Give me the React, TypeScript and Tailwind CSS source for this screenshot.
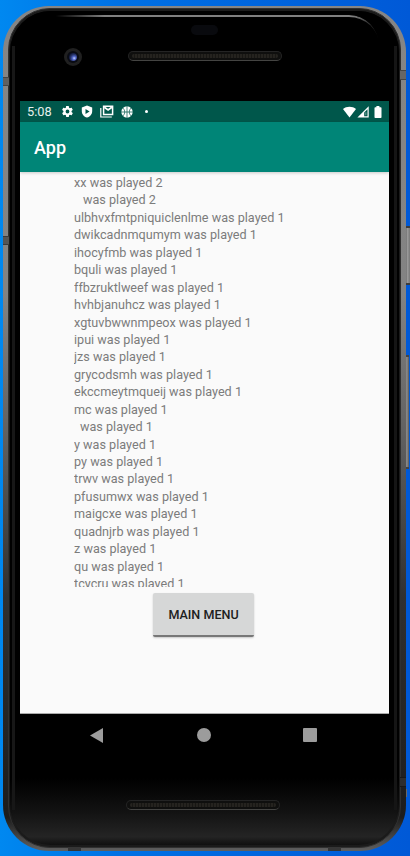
import React from "react";

const entries: { word: string; count: number; indent?: string }[] = [
  { word: "xx", count: 2 },
  { word: "", count: 2, indent: "pl-[9px]" },
  { word: "ulbhvxfmtpniquiclenlme", count: 1 },
  { word: "dwikcadnmqumym", count: 1 },
  { word: "ihocyfmb", count: 1 },
  { word: "bquli", count: 1 },
  { word: "ffbzruktlweef", count: 1 },
  { word: "hvhbjanuhcz", count: 1 },
  { word: "xgtuvbwwnmpeox", count: 1 },
  { word: "ipui", count: 1 },
  { word: "jzs", count: 1 },
  { word: "grycodsmh", count: 1 },
  { word: "ekccmeytmqueij", count: 1 },
  { word: "mc", count: 1 },
  { word: "", count: 1, indent: "pl-[6px]" },
  { word: "y", count: 1 },
  { word: "py", count: 1 },
  { word: "trwv", count: 1 },
  { word: "pfusumwx", count: 1 },
  { word: "maigcxe", count: 1 },
  { word: "quadnjrb", count: 1 },
  { word: "z", count: 1 },
  { word: "qu", count: 1 },
  { word: "tcycru", count: 1 },
];

function Speaker() {
  return (
    <div className="h-[10px] w-[154px] rounded-full border border-[#242424] border-b-[#444442] bg-[#0f0f0e] px-[3px] py-[2px]">
      <div className="h-full rounded-full bg-[repeating-linear-gradient(90deg,#25231f_0px,#25231f_2px,#181714_2px,#181714_3px)]" />
    </div>
  );
}

function StatusBar() {
  return (
    <div className="flex h-[21px] items-center bg-[#00574b] pl-[7px] pr-[7px] text-white">
      <span className="w-[35px] text-[12.800px] leading-[21px] text-[#e6efed]">5:08</span>
      <svg viewBox="0 0 24 24" className="-ml-px h-[13px] w-[13px]" fill="currentColor">
        <path d="M19.4 13a7.7 7.7 0 0 0 0-2l2.1-1.6c.2-.2.3-.5.1-.7l-2-3.4c-.1-.3-.4-.3-.6-.2l-2.5 1a7 7 0 0 0-1.7-1l-.4-2.6c0-.3-.2-.5-.5-.5h-4c-.3 0-.5.2-.5.5L9 5.100a7 7 0 0 0-1.700 1l-2.500-1c-.2-.1-.5 0-.6.2l-2 3.400c-.1.200-.1.500.1.700L4.500 11a7.700 7.700 0 0 0 0 2l-2.100 1.600c-.2.200-.3.500-.1.700l2 3.400c.1.300.4.300.6.200l2.500-1a7 7 0 0 0 1.700 1l.4 2.600c0 .3.200.5.500.5h4c.3 0 .5-.2.500-.5l.4-2.600a7 7 0 0 0 1.700-1l2.500 1c.2.100.5 0 .6-.2l2-3.400c.1-.2.100-.5-.1-.7zM12 15.500a3.500 3.500 0 1 1 0-7 3.500 3.500 0 0 1 0 7z" />
      </svg>
      <svg viewBox="0 0 12 13" className="ml-[7px] h-[13px] w-[12px]" fill="currentColor">
        <path fillRule="evenodd" d="M6 .5 11.200 2.500V6.300C11.200 9.300 9 11.800 6 12.600 3 11.800.8 9.300.8 6.300V2.500zM4.500 4v5L8.600 6.500z" />
      </svg>
      <svg viewBox="0 0 14 13" className="ml-[7px] h-[13px] w-[14px]" fill="none" stroke="currentColor">
        <path d="M.8 3v9h11" strokeWidth="1.200" />
        <path d="M3.600 1.300h9v8.300h-9z" strokeWidth="1.500" />
        <path d="M4.300 2.200 8.100 5l3.800-2.800" strokeWidth="1.800" />
      </svg>
      <svg viewBox="0 0 12 12" className="ml-[7px] h-[12px] w-[12px]">
        <circle cx="6" cy="6" r="5.700" fill="white" />
        <path d="M6 0v12M0 6h12M1.800 2c2.600 2.300 2.600 5.700 0 8M10.200 2c-2.600 2.300-2.600 5.700 0 8" stroke="#00574b" strokeWidth=".7" fill="none" />
      </svg>
      <i className="ml-[12px] h-[3px] w-[3px] rounded-full bg-white" />
      <div className="ml-auto flex items-center">
        <svg viewBox="0 0 13 12" className="h-[12px] w-[13px]" fill="currentColor">
          <path d="M0 3C3.500-.1 9.500-.1 13 3L6.500 11.500z" />
        </svg>
        <svg viewBox="0 0 12 12" className="ml-[1px] h-[12px] w-[12px]" fill="currentColor">
          <path fillRule="evenodd" d="M11.700.3v11.200H.4zM7.200 6.600v3.700h3.300V3.300z" />
          <path d="M8.400 6.200h.9v3h-.9z" opacity=".5" />
        </svg>
        <svg viewBox="0 0 8 12" className="ml-[5px] h-[12px] w-[8px]" fill="currentColor">
          <path d="M2.400 0h3v1.200h1.300q.8 0 .8.800v9.200q0 .8-.8.800H1.300q-.8 0-.8-.8V2q0-.8.8-.8h1.100z" />
        </svg>
      </div>
    </div>
  );
}

export default function App() {
  return (
    <main className="relative h-[856px] w-[410px] overflow-hidden bg-[linear-gradient(90deg,#0088f0_0%,#0070e4_30%,#0059d7_100%)] pl-[3px] pt-[6px] font-[Roboto,sans-serif]">
      <div className="absolute left-[405px] top-[226px] h-[59px] w-[5px] border-y-2 border-[#3c3c3c] bg-[linear-gradient(90deg,#555,#999_50%,#777)]" />
      <div className="absolute left-[404px] top-[355px] h-[114px] w-[5px] border-y-2 border-[#444] bg-[linear-gradient(90deg,#777,#8a8a8a_60%,#555)]" />
      <div className="absolute left-[405px] top-[789px] h-[8px] w-[2px] bg-[#686868]" />

      <div className="relative h-[845px] w-[403px] rounded-[46px] bg-[linear-gradient(180deg,#858585_0%,#838383_34%,#626262_50%,#303030_70%,#1c1c1c_96%,#606060_100%)] px-[5px] pb-[3px] pt-[2px]">
        <div className="absolute left-0 top-[71px] h-[9px] w-[6px] border-y border-[#464646] bg-[#606060]" />
        <div className="absolute left-0 top-[230px] h-[9px] w-[6px] border-y border-[#3b3b3b] bg-[#555]" />
        <div className="absolute right-0 top-[64px] h-[10px] w-[6px] border-y border-[#464646] bg-[#666]" />
        <div className="absolute right-0 top-[771px] h-[10px] w-[6px] border-y border-[#181818] bg-[#2d2d2d]" />
        <div className="h-full rounded-[42px] border border-[#303030] bg-[#1b1b1b] px-px pb-[2px] pt-[2px]">
          <div className="relative flex h-full flex-col rounded-[41px] bg-[linear-gradient(180deg,#000_0%,#000_92%,#121212_96%,#242424_99%,#101010_100%)] shadow-[inset_0_2px_1px_#000]">
            <div className="absolute left-[46px] right-[20px] top-[4px] h-[30px] rounded-tr-[32px] border-t-2 border-[#808080] mask-[linear-gradient(90deg,transparent,black_15%,black_92%,transparent)]" />
            <div className="absolute bottom-[35px] left-[2px] top-[35px] w-[3px] bg-[#171717]" />
            <div className="absolute bottom-[35px] right-[2px] top-[35px] w-[3px] bg-[#151515]" />

            <header className="h-[90px] pt-[14px]">
              <div className="ml-[181px] h-[10px] w-[27px] rounded-full bg-[#090a0e]" />
              <div className="flex items-start pl-[54px] pt-[13px]">
                <div className="flex h-[18px] w-[18px] items-center justify-center rounded-full bg-[#202020]">
                  <div className="flex h-[12px] w-[12px] items-center justify-center rounded-full bg-[#090b13]">
                    <div className="h-[8px] w-[8px] rounded-full bg-[radial-gradient(circle_at_65%_65%,#c7d5ff_0%,#5367c8_24%,#29366f_48%,#101633_75%)]" />
                  </div>
                </div>
                <div className="ml-[46px] mt-[3px]"><Speaker /></div>
              </div>
            </header>

            <section className="ml-[10px] flex h-[613px] w-[369px] flex-none flex-col border-b border-[#aaa] bg-[#fafafa]">
              <StatusBar />
              <div className="relative flex h-[50px] flex-none items-center bg-[#008577] pl-[14px] pt-px text-white shadow-[0_1px_3px_rgba(0,0,0,0.2)]">
                <h1 className="text-[18px] font-medium leading-6">App</h1>
              </div>
              <div className="ml-[54px] h-[415px] flex-none overflow-hidden pt-[2px] text-[12.640px] leading-[17.430px] text-[#7c7c7c]">
                {entries.map((entry, index) => (
                  <p key={index} className={entry.indent}>
                    {entry.word} was played {entry.count}
                  </p>
                ))}
              </div>
              <button className="ml-[133px] mt-[6px] h-[44px] w-[101px] flex-none rounded-[2px] border-b-2 border-[#777] bg-[#d6d7d7] pt-[2px] text-[12.570px] font-medium text-[#202020] shadow-[0_1px_2px_rgba(0,0,0,0.2)]">
                MAIN MENU
              </button>
            </section>

            <nav className="ml-[10px] flex h-[42px] w-[369px] items-center pl-[69px]">
              <svg className="h-[15px] w-[14px]" viewBox="0 0 14 15" fill="#9c9c9c"><path d="M14 0v15L1 7.500z" /></svg>
              <i className="ml-[94px] h-[14px] w-[14px] rounded-full bg-[#9c9c9c]" />
              <i className="ml-[92px] h-[14px] w-[14px] rounded-[1px] bg-[#9c9c9c]" />
            </nav>
            <div className="ml-[116px] mt-[44px]"><Speaker /></div>
          </div>
        </div>
        <div className="absolute bottom-0 left-[65px] h-[4px] w-[13px] bg-[#353535]" />
        <div className="absolute bottom-0 right-[65px] h-[4px] w-[13px] bg-[#353535]" />
      </div>
    </main>
  );
}
